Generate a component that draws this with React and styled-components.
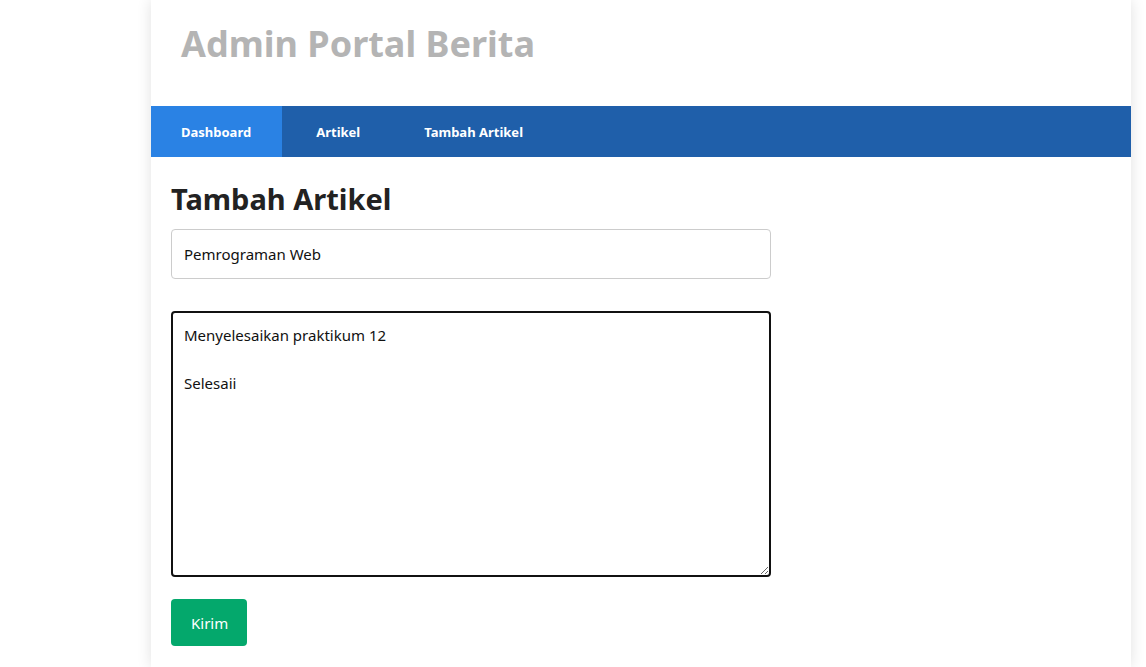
import React, { useState } from 'react'
import styled, { createGlobalStyle } from 'styled-components'

const GlobalStyle = createGlobalStyle`
  html, body {
    margin: 0;
    padding: 0;
    background: #fff;
    font-family: "Noto Sans", "Open Sans", sans-serif;
  }
`

const Page = styled.div`
  width: 980px;
  margin-left: 151px;
  min-height: 667px;
  background: #fff;
  box-shadow: 0 0 14px rgba(0, 0, 0, 0.12);
`

const Header = styled.header`
  height: 106px;
  padding: 0 30px;
  box-sizing: border-box;
  display: flex;
  align-items: flex-start;
`

const Brand = styled.h1`
  margin: 19px 0 0;
  font-size: 36px;
  font-weight: 700;
  color: #b4b4b4;
`

const Nav = styled.nav`
  display: flex;
  gap: 4px;
  height: 51px;
  background: #1f5faa;
`

const NavItem = styled.a`
  display: flex;
  align-items: center;
  padding: 0 ${p => (p.$active ? '31px' : '30px')} 0 30px;
  font-size: 13px;
  font-weight: 700;
  color: #fff;
  text-decoration: none;
  cursor: pointer;
  background: ${p => (p.$active ? '#2a82e4' : 'transparent')};
`

const Content = styled.main`
  padding: 20px;
`

const Title = styled.h2`
  margin: 0 0 8px;
  font-size: 29px;
  font-weight: 700;
  color: #222;
  line-height: 44px;
`

const Form = styled.form`
  display: flex;
  flex-direction: column;
  align-items: flex-start;
  width: 600px;
`

const Input = styled.input`
  width: 600px;
  height: 50px;
  box-sizing: border-box;
  padding: 0 12px;
  border: 1px solid #ccc;
  border-radius: 4px;
  font-family: "Noto Sans", sans-serif;
  font-size: 15px;
  color: #111;
  outline: none;
  margin-bottom: 32px;
`

const TextArea = styled.textarea`
  width: 600px;
  height: 266px;
  box-sizing: border-box;
  padding: 10px 11px;
  border: 2px solid #111;
  border-radius: 4px;
  font-family: "Noto Sans", sans-serif;
  font-size: 15px;
  line-height: 24px;
  color: #111;
  outline: none;
  resize: vertical;
  margin-bottom: 22px;
`

const Button = styled.button`
  height: 47px;
  padding: 0 19px 0 20px;
  border: none;
  border-radius: 4px;
  background: #04a86c;
  color: #fff;
  font-family: "Noto Sans", sans-serif;
  font-size: 15px;
  cursor: pointer;
`

export default function App() {
  const [judul, setJudul] = useState('Pemrograman Web')
  const [isi, setIsi] = useState('Menyelesaikan praktikum 12\n\nSelesaii')

  return (
    <>
      <GlobalStyle />
      <Page>
        <Header>
          <Brand>Admin Portal Berita</Brand>
        </Header>
        <Nav>
          <NavItem $active>Dashboard</NavItem>
          <NavItem>Artikel</NavItem>
          <NavItem>Tambah Artikel</NavItem>
        </Nav>
        <Content>
          <Title>Tambah Artikel</Title>
          <Form onSubmit={e => e.preventDefault()}>
            <Input value={judul} onChange={e => setJudul(e.target.value)} />
            <TextArea value={isi} onChange={e => setIsi(e.target.value)} />
            <Button type="submit">Kirim</Button>
          </Form>
        </Content>
      </Page>
    </>
  )
}
